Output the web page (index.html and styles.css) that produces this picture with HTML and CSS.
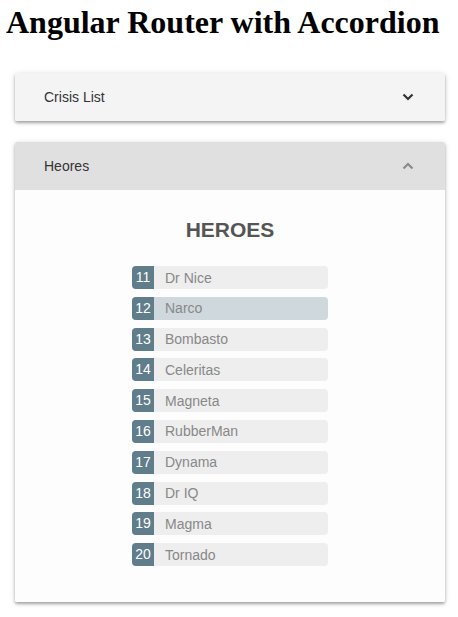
FILE: index.html
```html
<!DOCTYPE html>
<html>
<head>
<meta charset="utf-8">
<link rel="stylesheet" href="styles.css">
</head>
<body>
<h1 class="title">Angular Router with Accordion</h1>
<div class="accordion">
  <div class="panel">
    <div class="panel-header header-collapsed">
      <span class="panel-title">Crisis List</span>
      <svg class="chevron" width="12" height="8" viewBox="0 0 12 8"><polyline points="1.5,1.5 6,6 10.5,1.5" fill="none" stroke="#333" stroke-width="2.2"/></svg>
    </div>
  </div>
  <div class="panel">
    <div class="panel-header header-expanded">
      <span class="panel-title">Heores</span>
      <svg class="chevron" width="12" height="8" viewBox="0 0 12 8"><polyline points="1.5,6.5 6,2 10.5,6.5" fill="none" stroke="#8a8a8a" stroke-width="2.2"/></svg>
    </div>
    <div class="panel-body">
      <h2 class="heroes-title">HEROES</h2>
      <ul class="heroes">
        <li class="hero"><span class="badge">11</span><span class="name">Dr Nice</span></li>
        <li class="hero selected"><span class="badge">12</span><span class="name">Narco</span></li>
        <li class="hero"><span class="badge">13</span><span class="name">Bombasto</span></li>
        <li class="hero"><span class="badge">14</span><span class="name">Celeritas</span></li>
        <li class="hero"><span class="badge">15</span><span class="name">Magneta</span></li>
        <li class="hero"><span class="badge">16</span><span class="name">RubberMan</span></li>
        <li class="hero"><span class="badge">17</span><span class="name">Dynama</span></li>
        <li class="hero"><span class="badge">18</span><span class="name">Dr IQ</span></li>
        <li class="hero"><span class="badge">19</span><span class="name">Magma</span></li>
        <li class="hero"><span class="badge">20</span><span class="name">Tornado</span></li>
      </ul>
    </div>
  </div>
</div>
</body>
</html>
```
FILE: styles.css
```css
html, body {
  margin: 0;
  padding: 0;
  background: #fff;
}
body {
  padding-bottom: 14px;
}
.title {
  font-family: "Liberation Serif", "Times New Roman", serif;
  font-size: 32px;
  font-weight: bold;
  line-height: 35px;
  margin: 5px 0 0 6px;
  color: #000;
}
.accordion {
  margin: 33px 13px 0 15px;
  display: flex;
  flex-direction: column;
  gap: 21px;
  font-family: "Liberation Sans", Arial, sans-serif;
}
.panel {
  background: #fff;
  border-radius: 2px;
  box-shadow: 0 2px 3px rgba(0,0,0,.3), 0 1px 6px rgba(0,0,0,.12);
  overflow: hidden;
}
.panel-header {
  height: 48px;
  display: flex;
  align-items: center;
  justify-content: space-between;
  padding: 0 31px 0 29px;
}
.header-collapsed {
  background: #f4f4f4;
}
.header-expanded {
  background: #e1e0e0;
}
.panel-title {
  font-size: 14px;
  color: #333;
}
.chevron {
  display: block;
}
.panel-body {
  padding: 28px 0 36px;
  display: flex;
  flex-direction: column;
  align-items: center;
  background: #fdfdfd;
}
.heroes-title {
  margin: 0;
  font-size: 21px;
  line-height: 23px;
  font-weight: bold;
  color: #555;
}
.heroes {
  list-style: none;
  margin: 25px 0 0;
  padding: 0;
  width: 196px;
  display: flex;
  flex-direction: column;
  gap: 7.8px;
}
.hero {
  height: 23px;
  display: flex;
  align-items: center;
  background: #eee;
  border-radius: 4px;
}
.hero.selected {
  background: #cfd8dc;
}
.badge {
  width: 22px;
  height: 23px;
  line-height: 23px;
  text-align: center;
  background: #607d8b;
  color: #fff;
  font-size: 14px;
  border-radius: 4px 0 0 4px;
}
.name {
  margin-left: 11px;
  font-size: 14px;
  color: #888;
}
```
